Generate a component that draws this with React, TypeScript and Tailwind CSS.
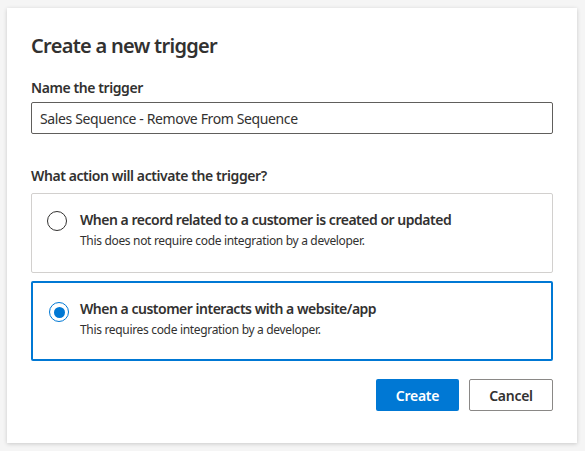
import React, { useState } from 'react';

const options = [
  {
    id: 'record',
    title: 'When a record related to a customer is created or updated',
    note: 'This does not require code integration by a developer.',
  },
  {
    id: 'web',
    title: 'When a customer interacts with a website/app',
    note: 'This requires code integration by a developer.',
  },
];

export default function App() {
  const [name, setName] = useState('Sales Sequence - Remove From Sequence');
  const [selected, setSelected] = useState('web');

  return (
    <div
      className="w-[585px] h-[451px] bg-[#f5f5f5] pt-2 pl-[7px] text-[#323130]"
      style={{ fontFamily: '"Noto Sans", "Open Sans", sans-serif' }}
    >
      <div className="w-[570px] h-[435px] bg-white shadow-[0_1px_4px_rgba(0,0,0,0.18)] px-6 pt-6">
        <h1 className="text-[20px] leading-[28px] font-semibold tracking-[-0.035em]">Create a new trigger</h1>

        <label className="block mt-[18px] text-[14px] leading-[20px] font-semibold tracking-[-0.03em]">
          Name the trigger
        </label>
        <input
          value={name}
          onChange={e => setName(e.target.value)}
          className="mt-1 w-full h-8 border border-[#605e5c] rounded-[2px] px-2 text-[14px] tracking-[-0.027em] text-[#323130] outline-none"
        />

        <div className="mt-8 text-[14px] leading-[20px] font-semibold tracking-[-0.03em]">
          What action will activate the trigger?
        </div>

        <div className="mt-[7px] flex flex-col gap-2">
          {options.map(o => {
            const on = selected === o.id;
            return (
              <button
                key={o.id}
                onClick={() => setSelected(o.id)}
                className={`h-[80px] w-full flex items-start text-left rounded-[2px] ${
                  on ? 'border-2 border-[#0078d4] pl-4 pt-[15px]' : 'border border-[#d2d0ce] pl-[15px] pt-[15px]'
                }`}
              >
                <span
                  className={`w-5 h-5 shrink-0 rounded-full flex items-center justify-center border ${
                    on ? 'mt-1 border-[#0078d4]' : 'mt-[2px] border-[#323130]'
                  }`}
                >
                  {on && <span className="w-[11px] h-[11px] rounded-full bg-[#0078d4]" />}
                </span>
                <span className={`flex flex-col ${on ? 'ml-[11px]' : 'ml-[13px]'}`}>
                  <span className="text-[14px] leading-[22px] font-semibold tracking-[-0.035em]">{o.title}</span>
                  <span className="mt-[2px] text-[12px] leading-[16px] tracking-[-0.027em] text-[#323130]">{o.note}</span>
                </span>
              </button>
            );
          })}
        </div>

        <div className="mt-[18px] flex justify-end gap-[10px]">
          <button className="w-[83px] h-8 rounded-[2px] bg-[#0078d4] text-white text-[14px] font-semibold tracking-[-0.02em]">
            Create
          </button>
          <button className="w-[84px] h-8 rounded-[2px] border border-[#8a8886] bg-white text-[14px] font-semibold tracking-[-0.02em]">
            Cancel
          </button>
        </div>
      </div>
    </div>
  );
}
